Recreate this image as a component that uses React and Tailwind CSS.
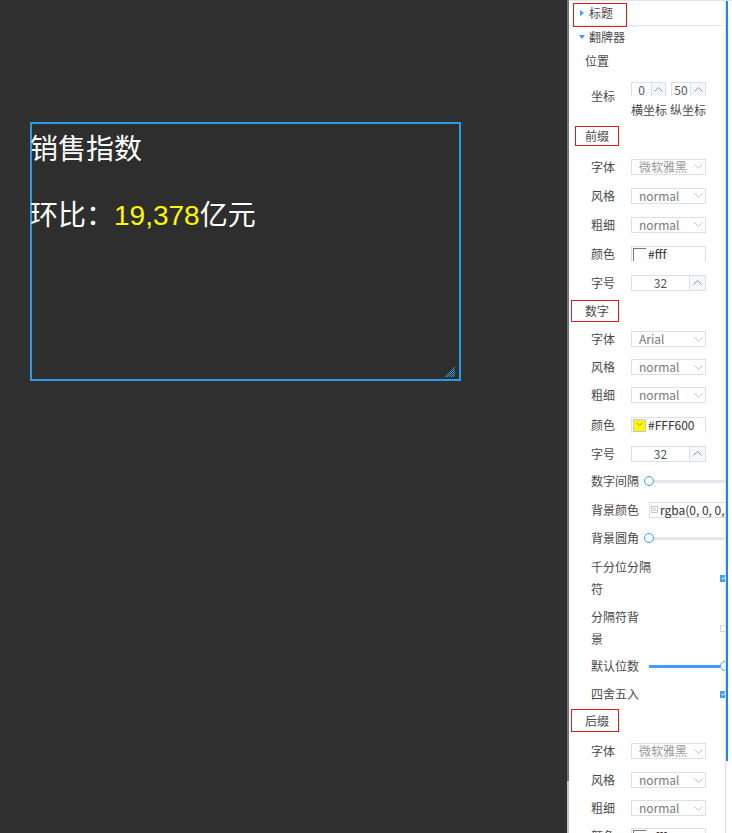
import React from 'react';

const BLUE = '#409eff';

/* Tiny chevrons used by selects and spinners. */
function ChevronDown() {
  return (
    <svg width="9" height="5" viewBox="0 0 9 5" aria-hidden="true">
      <path d="M0.5 0.5 L4.5 4.5 L8.5 0.5" fill="none" stroke="#c0c4cc" strokeWidth="1" />
    </svg>
  );
}

function ChevronUp() {
  return (
    <svg width="9" height="5" viewBox="0 0 9 5" aria-hidden="true">
      <path d="M0.5 4.5 L4.5 0.5 L8.5 4.5" fill="none" stroke="#909399" strokeWidth="1" />
    </svg>
  );
}

function Select({ value, muted }) {
  return (
    <div className="flex h-[16px] w-[75px] shrink-0 items-center justify-between border border-[#dcdfe6] pl-[7px] pr-[2px]">
      <span className={`text-[12px] leading-none ${muted ? 'text-[#999]' : 'text-[#7a7a7a]'}`}>{value}</span>
      <ChevronDown />
    </div>
  );
}

function ColorInput({ value, yellow }) {
  return (
    <div className="flex h-[16px] w-[75px] shrink-0 items-center border-x border-t border-[#dcdfe6] pl-[1px]">
      {yellow ? (
        <span className="flex h-[13px] w-[13px] items-start justify-center border border-[#c8c8c8] bg-[#FFF600] pt-[2px]">
          <svg width="7" height="4" viewBox="0 0 7 4" aria-hidden="true">
            <path d="M0.5 0.5 L3.5 3.5 L6.5 0.5" fill="none" stroke="#9a9a9a" strokeWidth="1" />
          </svg>
        </span>
      ) : (
        <span className="h-[13px] w-[13px] border-l border-t border-[#777] bg-white" />
      )}
      <span className="ml-[2px] text-[12px] leading-none text-[#333]">{value}</span>
    </div>
  );
}

function NumberInput({ value }) {
  return (
    <div className="flex h-[16px] w-[75px] shrink-0 items-stretch border border-[#dcdfe6]">
      <span className="flex flex-1 items-center justify-center text-[12px] leading-none text-[#555]">{value}</span>
      <span className="flex w-[16px] items-center justify-center border-l border-[#dcdfe6] bg-[#f5f7fa]">
        <ChevronUp />
      </span>
    </div>
  );
}

function SmallSpin({ value, inputW }) {
  return (
    <div className="flex h-[14px] w-[35px] items-stretch border-x border-t border-[#dcdfe6]">
      <span className={`flex ${inputW} items-center justify-center text-[12px] leading-none text-[#555]`}>{value}</span>
      <span className="flex flex-1 items-center justify-center border-l border-[#dcdfe6] bg-[#f5f7fa]">
        <ChevronUp />
      </span>
    </div>
  );
}

function Checkbox({ checked }) {
  return checked ? (
    <span className="-mr-[2px] ml-auto flex h-[7px] w-[7px] shrink-0 items-center justify-center bg-[#409eff]">
      <svg width="5" height="4" viewBox="0 0 5 4" aria-hidden="true">
        <path d="M0.6 2 L2 3.3 L4.4 0.7" fill="none" stroke="#fff" strokeWidth="1" />
      </svg>
    </span>
  ) : (
    <span className="-mr-[2px] ml-auto h-[7px] w-[7px] shrink-0 border border-[#d5d5d5] bg-white" />
  );
}

function Label({ children, wide }) {
  return (
    <span className={`${wide ? 'w-[58px]' : 'w-[40px]'} shrink-0 text-[12px] leading-[22px] text-[#4a4a4a]`}>
      {children}
    </span>
  );
}

function SectionHead({ title, box }) {
  return (
    <div className={`flex ${box}`}>
      <span className="flex h-full w-full items-center border border-[#e11b1b] text-[12px] text-[#4a4a4a]">{title}</span>
    </div>
  );
}

function FontGroup({ fontValue, colorValue, yellow, heights }) {
  return (
    <>
      <div className={`flex items-center pl-[22px] ${heights[0]}`}>
        <Label>字体</Label>
        <Select value={fontValue} muted={fontValue !== 'Arial'} />
      </div>
      <div className={`flex items-center pl-[22px] ${heights[1]}`}>
        <Label>风格</Label>
        <Select value="normal" />
      </div>
      <div className={`flex items-center pl-[22px] ${heights[2]}`}>
        <Label>粗细</Label>
        <Select value="normal" />
      </div>
      <div className={`flex items-center pl-[22px] ${heights[3]}`}>
        <Label>颜色</Label>
        <ColorInput value={colorValue} yellow={yellow} />
      </div>
      {heights[4] && (
        <div className={`flex items-center pl-[22px] ${heights[4]}`}>
          <Label>字号</Label>
          <NumberInput value="32" />
        </div>
      )}
    </>
  );
}

/* Dotted resize grip in the corner of the selected widget. */
function ResizeGrip() {
  const dots = [];
  for (let y = 0; y < 10; y++) {
    for (let x = 0; x < 10; x++) {
      if (x + y >= 9 && (x + y) % 2 === 1) dots.push(<rect key={`${x}-${y}`} x={x} y={y} width="1" height="1" fill="#2b9be6" />);
    }
  }
  return (
    <svg className="absolute bottom-[2px] right-[4px]" width="10" height="10" viewBox="0 0 10 10" aria-hidden="true">
      {dots}
    </svg>
  );
}

function Checker() {
  return (
    <svg width="13" height="13" viewBox="0 0 13 13" aria-hidden="true">
      <rect x="0.5" y="0.5" width="12" height="12" fill="#fff" stroke="#999" />
      <rect x="3" y="3" width="2" height="2" fill="#bbb" />
      <rect x="7" y="3" width="2" height="2" fill="#bbb" />
      <rect x="5" y="5" width="2" height="2" fill="#bbb" />
      <rect x="9" y="5" width="1" height="2" fill="#bbb" />
      <rect x="3" y="7" width="2" height="2" fill="#bbb" />
      <rect x="7" y="7" width="2" height="2" fill="#bbb" />
      <rect x="5" y="9" width="2" height="1" fill="#bbb" />
    </svg>
  );
}

export default function App() {
  return (
    <div className="flex h-[833px] w-[732px] overflow-hidden bg-[#303030] font-['Noto_Sans_CJK_SC',sans-serif]">
      {/* Canvas */}
      <div className="relative h-full w-[567px] shrink-0 bg-[#303030]">
        <div className="absolute left-[30px] top-[122px] h-[259px] w-[431px] border-2 border-[#2b9be6] bg-[#2e2e2e]">
          <div className="-ml-[2px] mt-[9px] text-[28px] leading-[28px] text-white">销售指数</div>
          <div className="-ml-[2px] mt-[38px] text-[28px] leading-[28px] text-white">
            环比：
            <span className="font-['Liberation_Sans',Arial,sans-serif] text-[#FFF600]">19,378</span>
            亿元
          </div>
          <ResizeGrip />
        </div>
      </div>

      {/* Canvas scrollbar */}
      <div className="flex h-full w-[2px] shrink-0 flex-col">
        <div className="h-[781px] bg-[#727272]" />
        <div className="flex-1 bg-[#c4c4c4]" />
      </div>

      {/* Settings panel */}
      <div className="flex h-full flex-1 border-t border-[#e4e4e4] bg-white">
        <div className="w-[156px] shrink-0 overflow-hidden">
          <div className="relative flex h-[25px] items-center border-b border-[#e8e8e8] pl-[11px]">
            <svg width="4" height="6" viewBox="0 0 4 6" aria-hidden="true">
              <path d="M0 0 L4 3 L0 6 Z" fill={BLUE} />
            </svg>
            <span className="ml-[5px] text-[12px] text-[#4a4a4a]">标题</span>
            <span className="absolute left-[4px] top-[2px] h-[24px] w-[54px] border border-[#e11b1b]" />
          </div>

          <div className="flex h-[22px] items-center pl-[10px]">
            <svg width="6" height="4" viewBox="0 0 6 4" aria-hidden="true">
              <path d="M0 0 L6 0 L3 4 Z" fill={BLUE} />
            </svg>
            <span className="ml-[4px] text-[12px] text-[#4a4a4a]">翻牌器</span>
          </div>

          <div className="flex h-[26px] items-center pl-[16px] text-[12px] text-[#4a4a4a]">位置</div>

          <div className="flex h-[46px] pl-[22px]">
            <span className="w-[40px] shrink-0 pt-[11px] text-[12px] leading-[22px] text-[#4a4a4a]">坐标</span>
            <div className="flex flex-col pt-[8px]">
              <div className="flex gap-[5px]">
                <SmallSpin value="0" inputW="w-[19px]" />
                <SmallSpin value="50" inputW="w-[18px]" />
              </div>
              <div className="mt-[3px] flex gap-[3px] text-[12px] leading-[22px] text-[#4a4a4a]">
                <span>横坐标</span>
                <span>纵坐标</span>
              </div>
            </div>
          </div>

          <div className="h-[32px] pl-[6px] pt-[6px]">
            <SectionHead title={<span className="pl-[9px]">前缀</span>} box="h-[20px] w-[44px]" />
          </div>
          <FontGroup
            fontValue="微软雅黑"
            colorValue="#fff"
            heights={['h-[29px]', 'h-[29px]', 'h-[29px]', 'h-[29px]', 'h-[29px]']}
          />

          <div className="h-[28px] pl-[2px] pt-[3px]">
            <SectionHead title={<span className="pl-[13px]">数字</span>} box="h-[22px] w-[48px]" />
          </div>
          <FontGroup
            fontValue="Arial"
            colorValue="#FFF600"
            yellow
            heights={['h-[28px]', 'h-[28px]', 'h-[28px]', 'h-[31px]', 'h-[27px]']}
          />

          <div className="flex h-[28px] items-center pl-[22px]">
            <span className="w-[53px] shrink-0 text-[12px] leading-[22px] text-[#4a4a4a]">数字间隔</span>
            <span className="h-[10px] w-[10px] shrink-0 rounded-full border-[1.5px] border-[#409eff] bg-white" />
            <span className="h-[3px] flex-1 bg-[#e4e7ed]" />
          </div>

          <div className="flex h-[29px] items-center pl-[22px]">
            <Label wide>背景颜色</Label>
            <div className="flex h-[16px] w-[90px] shrink-0 items-center border border-[#dcdfe6] pl-[1px]">
              <Checker />
              <span className="ml-[2px] whitespace-nowrap text-[12px] leading-none text-[#333]">rgba(0, 0, 0, 0)</span>
            </div>
          </div>

          <div className="flex h-[28px] items-center pl-[22px]">
            <span className="w-[53px] shrink-0 text-[12px] leading-[22px] text-[#4a4a4a]">背景圆角</span>
            <span className="h-[10px] w-[10px] shrink-0 rounded-full border-[1.5px] border-[#409eff] bg-white" />
            <span className="h-[3px] flex-1 bg-[#e4e7ed]" />
          </div>

          <div className="flex h-[52px] items-center pl-[22px]">
            <span className="text-[12px] leading-[22px] text-[#4a4a4a]">
              千分位分隔
              <br />
              符
            </span>
            <Checkbox checked />
          </div>

          <div className="flex h-[48px] items-center pl-[22px]">
            <span className="text-[12px] leading-[22px] text-[#4a4a4a]">
              分隔符背
              <br />
              景
            </span>
            <Checkbox />
          </div>

          <div className="flex h-[28px] items-center pl-[22px]">
            <Label wide>默认位数</Label>
            <span className="h-[3px] w-[71px] shrink-0 bg-[#409eff]" />
            <span className="h-[10px] w-[10px] shrink-0 rounded-full border-[1.5px] border-[#409eff] bg-white" />
          </div>

          <div className="flex h-[28px] items-center pl-[22px]">
            <span className="text-[12px] leading-[22px] text-[#4a4a4a]">四舍五入</span>
            <Checkbox checked />
          </div>

          <div className="h-[28px] pl-[2px] pt-[1px]">
            <SectionHead title={<span className="pl-[13px]">后缀</span>} box="h-[23px] w-[48px]" />
          </div>
          <FontGroup
            fontValue="微软雅黑"
            colorValue="#fff"
            heights={['h-[30px]', 'h-[28px]', 'h-[28px]', 'h-[28px]']}
          />
        </div>

        {/* Panel scrollbar */}
        <div className="w-[7px] shrink-0 border-l border-[#e0e0e0]">
          <div className="h-[760px] w-[2px] bg-[#1e88e5]" />
        </div>
      </div>
    </div>
  );
}
